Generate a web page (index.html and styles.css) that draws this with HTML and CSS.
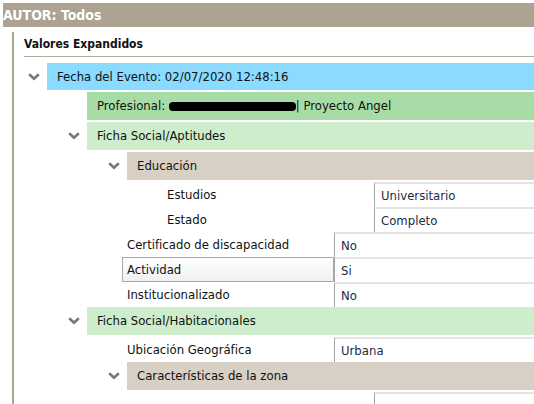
FILE: index.html
```html
<!DOCTYPE html>
<html lang="es">
<head>
<meta charset="utf-8">
<title>Valores Expandidos</title>
<link rel="stylesheet" href="styles.css">
</head>
<body>
<div class="author-bar">AUTOR: Todos</div>
<div class="panel">
  <div class="panel-title">Valores Expandidos</div>
  <div class="tree">
    <div class="group lvl0">
      <div class="group-head">
        <span class="chev"><svg width="12" height="8" viewBox="0 0 12 8"><polyline points="1.2,1.2 6,5.8 10.8,1.2" fill="none" stroke="#777" stroke-width="2.6"/></svg></span>
        <div class="box blue">Fecha del Evento: 02/07/2020 12:48:16</div>
      </div>
      <div class="children">
        <div class="box-row"><div class="box green">Profesional: <span class="redact"></span>| Proyecto Angel</div></div>
        <div class="group">
          <div class="group-head">
            <span class="chev"><svg width="12" height="8" viewBox="0 0 12 8"><polyline points="1.2,1.2 6,5.8 10.8,1.2" fill="none" stroke="#777" stroke-width="2.6"/></svg></span>
            <div class="box light">Ficha Social/Aptitudes</div>
          </div>
          <div class="children">
            <div class="group">
              <div class="group-head">
                <span class="chev"><svg width="12" height="8" viewBox="0 0 12 8"><polyline points="1.2,1.2 6,5.8 10.8,1.2" fill="none" stroke="#777" stroke-width="2.6"/></svg></span>
                <div class="box tan">Educación</div>
              </div>
              <div class="children">
                <div class="leaf"><div class="label">Estudios</div><div class="value">Universitario</div></div>
                <div class="leaf"><div class="label">Estado</div><div class="value">Completo</div></div>
              </div>
            </div>
            <div class="leaf"><div class="label">Certificado de discapacidad</div><div class="value">No</div></div>
            <div class="leaf"><div class="label selected">Actividad</div><div class="value">Si</div></div>
            <div class="leaf"><div class="label">Institucionalizado</div><div class="value">No</div></div>
          </div>
        </div>
        <div class="group">
          <div class="group-head">
            <span class="chev"><svg width="12" height="8" viewBox="0 0 12 8"><polyline points="1.2,1.2 6,5.8 10.8,1.2" fill="none" stroke="#777" stroke-width="2.6"/></svg></span>
            <div class="box light">Ficha Social/Habitacionales</div>
          </div>
          <div class="children">
            <div class="leaf"><div class="label">Ubicación Geográfica</div><div class="value">Urbana</div></div>
            <div class="group">
              <div class="group-head">
                <span class="chev"><svg width="12" height="8" viewBox="0 0 12 8"><polyline points="1.2,1.2 6,5.8 10.8,1.2" fill="none" stroke="#777" stroke-width="2.6"/></svg></span>
                <div class="box tan">Características de la zona</div>
              </div>
              <div class="children">
                <div class="leaf last"><div class="label">Iluminación</div><div class="value"></div></div>
              </div>
            </div>
          </div>
        </div>
      </div>
    </div>
  </div>
</div>
</body>
</html>
```
FILE: styles.css
```css
html, body {
  margin: 0;
  padding: 0;
  background: #fff;
  overflow: hidden;
}
body {
  padding: 3px 0 0 3px;
  font-family: "DejaVu Sans Condensed", "DejaVu Sans", Verdana, sans-serif;
  font-stretch: semi-condensed;
  font-size: 13px;
  color: #111;
  height: 404px;
  box-sizing: border-box;
}
.author-bar {
  height: 24px;
  line-height: 24px;
  background: #aca393;
  color: #fff;
  font-weight: bold;
  font-size: 14px;
}
.panel {
  margin: 5px 0 0 9px;
  border-left: 2px solid #aca393;
  padding-left: 10px;
  height: 400px;
}
.panel-title {
  font-weight: bold;
  font-size: 12px;
  padding-top: 4px;
  line-height: 16px;
  height: 20px;
  border-bottom: 1px solid #b5ab9c;
}
.tree {
  margin-top: 6px;
}
.group-head {
  display: flex;
  align-items: stretch;
  margin-bottom: 2px;
}
.chev {
  width: 23px;
  flex: none;
  display: flex;
  align-items: center;
  padding-left: 4px;
  box-sizing: border-box;
}
.box {
  flex: 1;
  height: 28px;
  line-height: 28px;
  padding-left: 10px;
  white-space: nowrap;
}
.lvl0 > .group-head .box { height: 27px; line-height: 27px; }
.blue { background: #8adbff; }
.green { background: #a7dca6; }
.light { background: #cdedcd; }
.tan { background: #d9d0c5; }
.box-row {
  display: flex;
  margin-left: 23px;
  margin-bottom: 2px;
}
.children {
  padding-left: 40px;
}
.redact {
  display: inline-block;
  width: 127px;
  height: 9px;
  background: #000;
  border-radius: 4px;
  vertical-align: middle;
}
.leaf {
  display: flex;
  margin-left: 18px;
  height: 25px;
}
.leaf.last .label { padding-top: 8px; }
.label {
  width: 212px;
  flex: none;
  box-sizing: border-box;
  padding-left: 5px;
  line-height: 25px;
  white-space: nowrap;
  overflow: hidden;
}
.label.selected {
  border: 1px solid #a9a9a9;
  padding-left: 4px;
  line-height: 23px;
  background: linear-gradient(#ffffff, #f0f0f0);
}
.value {
  flex: 1;
  background: #fff;
  border-left: 1px solid #a5a5a5;
  border-top: 2px solid #e4e4e4;
  padding-left: 6px;
  line-height: 23px;
  color: #1d2b45;
  white-space: nowrap;
}
```
